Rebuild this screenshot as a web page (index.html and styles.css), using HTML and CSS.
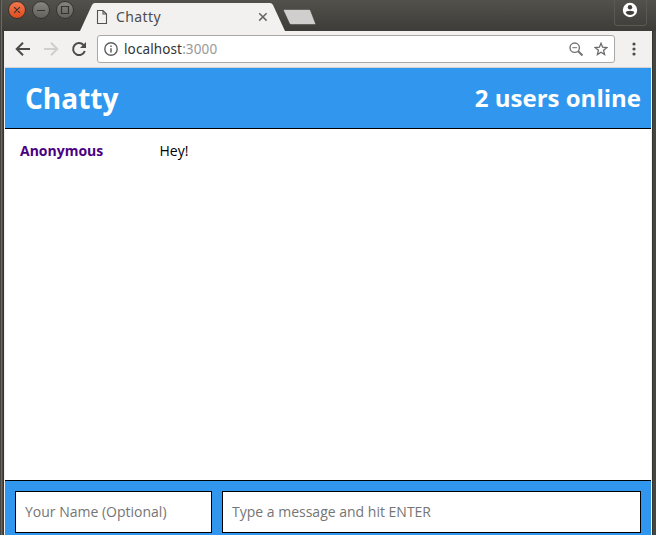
FILE: index.html
```html
<!DOCTYPE html>
<html lang="en">
<head>
<meta charset="utf-8">
<title>Chatty</title>
<link rel="stylesheet" href="styles.css">
</head>
<body>
<div class="window">
  <header class="titlebar">
    <div class="controls">
      <svg width="76" height="22" viewBox="0 0 76 22">
        <defs>
          <linearGradient id="red" x1="0" y1="0" x2="0" y2="1"><stop offset="0" stop-color="#f4784f"/><stop offset="1" stop-color="#df4b1c"/></linearGradient>
          <linearGradient id="gray" x1="0" y1="0" x2="0" y2="1"><stop offset="0" stop-color="#888680"/><stop offset="1" stop-color="#62605a"/></linearGradient>
        </defs>
        <g stroke="#33322e">
          <circle cx="17" cy="10" r="8.5" fill="url(#red)"/>
          <circle cx="41" cy="10" r="8.5" fill="url(#gray)"/>
          <circle cx="65" cy="10" r="8.5" fill="url(#gray)"/>
        </g>
        <path d="M14.2 7.2l5.6 5.6M19.8 7.2l-5.6 5.6M37 10.5h8M61.5 6.5h7v7h-7z" fill="none" stroke="#37342f" stroke-width="1.2"/>
      </svg>
    </div>
    <div class="tab">
      <svg class="tab-shape" width="205" height="28" viewBox="0 0 205 28"><path d="M0 28L12 2Q13 0 15 0H190Q192 0 193 2L205 28Z" fill="#f2f1f0"/></svg>
      <svg class="doc" width="12" height="14" viewBox="0 0 12 14"><path d="M1.500.5h5.500l3.500 3.500v9.500h-9zM7 .5v3.500h3.500" fill="none" stroke="#54524f" stroke-width="1.100"/></svg>
      <span class="tab-title">Chatty</span>
      <svg class="tab-close" width="10" height="10" viewBox="0 0 10 10"><path d="M1.2 1.2l7.4 7.4M8.6 1.2L1.2 8.6" stroke="#666" stroke-width="1.5"/></svg>
    </div>
    <svg class="new-tab" width="34" height="17" viewBox="0 0 34 17"><path d="M2.500 .5H27Q28 .5 28.500 1.500L33.500 14.500Q34 15.500 32.500 15.500H9.500Q8 15.500 7.500 14.500L1.500 1.500Q1.200.5 2.500 .5Z" fill="#d0cfce" stroke="#3a3935" stroke-width=".5"/></svg>
    <div class="profile">
      <svg width="16" height="16" viewBox="0 0 16 16"><circle cx="8" cy="8" r="7.200" fill="#fff"/><circle cx="8" cy="5.300" r="2.200" fill="#403f3a"/><path d="M3.700 10.700Q4 8.800 8 8.800T12.300 10.700Q10.800 12.900 8 12.900T3.700 10.700Z" fill="#403f3a"/></svg>
    </div>
  </header>
  <div class="body">
    <nav class="toolbar">
      <svg class="nav" width="80" height="18" viewBox="0 0 80 18">
        <path d="M15 9H2.500M8 2.700L1.700 9L8 15.300" fill="none" stroke="#4b4a48" stroke-width="2"/>
        <path d="M29 9H41.500M36 2.700L42.300 9L36 15.300" fill="none" stroke="#cfcecc" stroke-width="2"/>
        <path d="M68.500 5A6 6 0 1 0 69.800 11" fill="none" stroke="#4b4a48" stroke-width="2"/><path d="M71 2V8H65Z" fill="#4b4a48"/>
      </svg>
      <div class="address">
        <svg width="14" height="14" viewBox="0 0 14 14"><circle cx="7" cy="7" r="6.200" fill="none" stroke="#5f5f5f" stroke-width="1.400"/><path d="M7 6.200v4.400M7 3.400v1.500" stroke="#5f5f5f" stroke-width="1.500"/></svg>
        <span class="url">localhost<span class="port">:3000</span></span>
        <svg class="lens" width="15" height="15" viewBox="0 0 15 15"><circle cx="5.700" cy="5.700" r="4.700" fill="none" stroke="#747474" stroke-width="1.400"/><path d="M3.300 5.700h4.800" stroke="#747474"/><path d="M9.200 9.200l4.300 4.300" stroke="#747474" stroke-width="2"/></svg>
        <svg width="14" height="14" viewBox="0 0 14 14"><path d="M7 1.300L8.600 5.200L12.900 5.500L9.600 8.300L10.600 12.500L7 10.200L3.400 12.500L4.400 8.300L1.100 5.500L5.400 5.200Z" fill="none" stroke="#6a6a6a" stroke-width="1.300"/></svg>
      </div>
      <svg class="menu" width="4" height="14" viewBox="0 0 4 14" fill="#4d4c4a"><circle cx="2" cy="2" r="1.600"/><circle cx="2" cy="7" r="1.600"/><circle cx="2" cy="12" r="1.600"/></svg>
    </nav>
    <main class="chat">
      <div class="chat-head"><h1>Chatty</h1><h2>2 users online</h2></div>
      <div class="messages">
        <div class="message"><b class="author">Anonymous</b><span class="text">Hey!</span></div>
      </div>
      <form class="composer">
        <input class="name" placeholder="Your Name (Optional)">
        <input class="entry" placeholder="Type a message and hit ENTER">
      </form>
    </main>
  </div>
</div>
</body>
</html>
```
FILE: styles.css
```css
* { box-sizing: border-box; }
body { margin: 0; overflow: hidden; font-family: "Open Sans", sans-serif; }
svg { display: block; flex: none; }
.window {
  width: 656px;
  height: 535px;
  display: flex;
  flex-direction: column;
  background: linear-gradient(90deg, #45433e 0 1px, #6a6861 1px 2px, #4b4943 2px 3px, #34332f 3px 4px, #3c3b37 4px 652px, #353632 652px 653px, #454640 653px);
}
.titlebar {
  display: flex;
  height: 31px;
  flex: none;
  margin-left: 2px;
  background: linear-gradient(#52514b, #3d3c38);
}
.controls { width: 78px; margin-left: -2px; }
.tab {
  position: relative;
  display: flex;
  align-items: center;
  width: 205px;
  height: 28px;
  margin: 3px 0 0 2px;
  padding-left: 16px;
}
.tab-shape { position: absolute; left: 0; top: 0; }
.doc, .tab-title, .tab-close { position: relative; }
.tab-title {
  margin-left: 8px;
  width: 142px;
  font: 14px/20px "Noto Sans", sans-serif;
  letter-spacing: 0.4px;
  color: #4c4c4c;
}
.new-tab { margin: 9px 0 0 -3px; }
.profile {
  width: 33px;
  height: 26px;
  margin-left: 298px;
  padding: 2px 0 0 7px;
  border: 1px solid #5a5953;
  border-top: 0;
  border-radius: 0 0 4px 4px;
}
.body {
  flex: 1;
  display: flex;
  flex-direction: column;
  min-height: 0;
  margin: 0 4px;
  padding: 0 1px;
  background: #f2f1f0;
}
.toolbar {
  display: flex;
  height: 37px;
  flex: none;
  align-items: center;
  padding-left: 10px;
  border-bottom: 1px solid #d3d2d0;
}
.nav { margin-right: 2px; }
.address {
  display: flex;
  align-items: center;
  width: 518px;
  height: 28px;
  padding: 0 6px;
  background: #fff;
  border: 1px solid #aaa9a8;
  border-radius: 3px;
}
.url {
  flex: 1;
  margin-left: 6px;
  font: 13.5px/20px "Noto Sans", sans-serif;
  letter-spacing: 0.12px;
  color: #333;
}
.port { color: #999; }
.lens { margin-right: 10px; }
.menu { margin-left: 16.500px; }
.chat { flex: 1; display: flex; flex-direction: column; min-height: 0; background: #fff; }
.chat-head {
  display: flex;
  flex: none;
  align-items: center;
  justify-content: space-between;
  height: 61px;
  padding: 0 10px 0 20px;
  color: #fff;
  background: #3197ee;
  border-bottom: 1px solid #000;
}
h1 { margin: 0; font-size: 28px; }
h2 { margin: 0; padding-bottom: 2px; font-size: 24px; }
.messages { flex: 1; padding: 12px 15px; font-size: 14px; line-height: 20px; }
.message { display: flex; }
.author { width: 139.500px; color: #4b0082; }
.text { color: #000; }
.composer {
  display: flex;
  flex: none;
  gap: 10px;
  height: 55px;
  padding: 10px 10px 0;
  background: #3197ee;
  border-top: 1px solid #000;
}
input {
  height: 42px;
  padding: 0 9px 2px;
  border: 1px solid #000;
  border-radius: 0;
  background: #fff;
  font: 14px "Open Sans", sans-serif;
}
input::placeholder { color: #757575; }
.name { width: 197px; }
.entry { flex: 1; min-width: 0; }
```
